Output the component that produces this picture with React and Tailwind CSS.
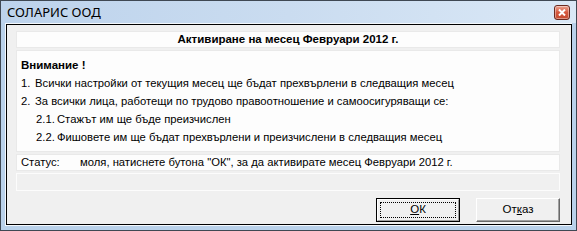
import React from 'react';

const font = { fontFamily: '"Liberation Sans", Arial, sans-serif' };

function CloseButton() {
  return (
    <div className="w-[16px] h-[15px] rounded-[3px] border border-[#6b2a20] bg-gradient-to-b from-[#eba391] via-[#d5573d] to-[#c44a30] flex items-center justify-center shadow-[inset_0_0_0_1px_rgba(255,255,255,0.4)]">
      <svg width="8" height="7" viewBox="0 0 8 7">
        <path d="M1 0.5 L7 6.5 M7 0.5 L1 6.5" stroke="#fff" strokeWidth="2" />
      </svg>
    </div>
  );
}

function Cell({ children, className = '' }) {
  return (
    <div className={`bg-[#fdfdfd] border border-[#e9e9e9] ${className}`}>{children}</div>
  );
}

export default function App() {
  return (
    <div className="w-[577px] h-[231px] border border-[#3f4853] bg-[#b9d1ea] flex flex-col text-black text-[11.25px]" style={font}>
      {/* Title bar */}
      <div className="h-[22px] flex items-center pl-[6px] pr-[6px] bg-gradient-to-r from-[#bdd3ec] via-[#cadcf0] to-[#dae8f6]">
        <span className="flex-1 text-[13px] pt-[1px]" style={{ fontFamily: '"Noto Sans", "Open Sans", sans-serif' }}>
          СОЛАРИС ООД
        </span>
        <CloseButton />
      </div>

      {/* Client area */}
      <div className="mx-[4px] h-[203px] border-l border-t border-b border-[#f4f8fc] border-r-0">
        <div className="h-full border border-black bg-[#f0f0f0] flex flex-col pt-[6px] pl-[9px] pr-[11px]">
          <div className="flex flex-col gap-[2px]">
            <Cell className="h-[17px] flex items-center justify-center font-bold text-[11.5px]">
              Активиране на месец Февруари 2012 г.
            </Cell>
            <Cell className="h-[102px] pl-[4px] pt-[5px] leading-[18px]">
              <div className="font-bold text-[11.5px]">Внимание !</div>
              <div className="flex">
                <span className="w-[14px]">1.</span>
                <span>Всички настройки от текущия месец ще бъдат прехвърлени в следващия месец</span>
              </div>
              <div className="flex">
                <span className="w-[14px]">2.</span>
                <span>За всички лица, работещи по трудово правоотношение и самоосигуряващи се:</span>
              </div>
              <div className="flex pl-[15px]">
                <span className="w-[21px]">2.1.</span>
                <span>Стажът им ще бъде преизчислен</span>
              </div>
              <div className="flex pl-[15px]">
                <span className="w-[21px]">2.2.</span>
                <span>Фишовете им ще бъдат прехвърлени и преизчислени в следващия месец</span>
              </div>
            </Cell>
            <Cell className="h-[17px] flex items-center pl-[4px]">
              <span className="w-[59px]">Статус:</span>
              <span>моля, натиснете бутона "ОК", за да активирате месец Февруари 2012 г.</span>
            </Cell>
            <div className="h-[18px] border border-[#fcfcfc] bg-[#f0f0f0]" />
          </div>

          {/* Buttons */}
          <div className="flex justify-end gap-[16px] mt-[7px] text-[11.5px]">
            <div className="w-[84px] h-[24px] border border-black bg-[#f0f0f0]">
              <div className="h-full border-t border-l border-white border-r border-b border-r-[#a0a0a0] border-b-[#a0a0a0] p-[2px]">
                <div className="h-full border border-dotted border-black flex items-center justify-center">
                  <span><span className="underline">О</span>К</span>
                </div>
              </div>
            </div>
            <div className="w-[84px] h-[24px] border border-t-white border-l-white border-r-[#696969] border-b-[#696969] bg-[#f0f0f0] shadow-[inset_-1px_-1px_0_#a0a0a0] flex items-center justify-center">
              <span>От<span className="underline">к</span>аз</span>
            </div>
          </div>
        </div>
      </div>
    </div>
  );
}
